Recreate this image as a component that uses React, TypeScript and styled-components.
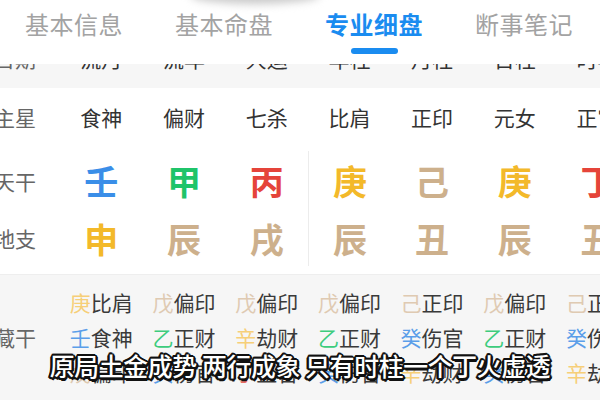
import React from 'react'
import styled, { createGlobalStyle } from 'styled-components'

const GlobalStyle = createGlobalStyle`
    html, body {
        margin: 0;
        padding: 0;
        background: #ffffff;
        font-family: "Noto Sans CJK SC", "Noto Sans", sans-serif;
    }
`

const Screen = styled.div`
    position: relative;
    width: 600px;
    height: 400px;
    overflow: hidden;
    background: #fff;
    display: flex;
    flex-direction: column;
`
const Smudge = styled.div`
    position: absolute;
    top: -14px;
    left: 190px;
    width: 130px;
    height: 18px;
    border-radius: 50%;
    background: #c9c9c9;
    filter: blur(4px);
    z-index: 3;
`
const TabBar = styled.div`
    position: relative;
    z-index: 2;
    height: 64px;
    flex-shrink: 0;
    background: #fff;
    display: grid;
    grid-template-columns: repeat(4, 150px);
    margin-left: -1px;
`
const Tab = styled.div<{ $active?: boolean }>`
    display: flex;
    flex-direction: column;
    align-items: center;
    padding-top: 8px;
    font-size: 24px;
    line-height: 32px;
    letter-spacing: 0.5px;
    color: ${p => (p.$active ? '#1a8cf0' : '#a3a3a3')};
    font-weight: ${p => (p.$active ? 700 : 400)};
`
const TabLine = styled.div`
    margin-top: 8px;
    width: 47px;
    height: 6px;
    border-radius: 3px;
    background: #1a8cf0;
`
const Viewport = styled.div`
    flex: 1;
    overflow: hidden;
`
const Sheet = styled.div`
    margin-top: -24px;
    margin-left: -10px;
`
const Row = styled.div<{ $h: number; $pb?: number; $grey?: boolean }>`
    display: grid;
    grid-template-columns: 70px repeat(7, 82.7px);
    height: ${p => p.$h}px;
    box-sizing: border-box;
    padding-bottom: ${p => p.$pb ?? 0}px;
    align-items: center;
    background: ${p => (p.$grey ? '#f6f6f6' : '#fff')};
`
const Label = styled.div`
    padding-right: 20px;
    text-align: center;
    font-size: 21px;
    color: #666;
`
const Cell = styled.div<{ $split?: boolean }>`
    height: 100%;
    display: flex;
    align-items: center;
    justify-content: center;
    font-size: 21px;
    color: #333;
    border-left: ${p => (p.$split ? '1px solid #ececec' : 'none')};
`
const BigChar = styled.span<{ $c: string }>`
    font-size: 34px;
    font-weight: 700;
    color: ${p => p.$c};
`
const Hidden = styled.div`
    display: grid;
    grid-template-columns: 70px repeat(7, 82.7px);
    grid-template-rows: repeat(3, 35px);
    padding-top: 9px;
    background: #f6f6f6;
    height: 160px;
    border-top: 1px solid #eeeeee;
`
const HiddenLabel = styled(Label)`
    grid-row: 1 / span 3;
    align-self: center;
`
const HiddenCell = styled.div`
    display: flex;
    align-items: center;
    justify-content: center;
    font-size: 21px;
    color: #3a3a3a;
`
const Stem = styled.span<{ $c: string }>`
    color: ${p => p.$c};
`
const Subtitle = styled.div`
    position: absolute;
    left: 0;
    right: 0;
    top: 347px;
    z-index: 4;
    text-align: center;
    font-size: 24.8px;
    font-weight: 500;
    color: #fff;
    letter-spacing: -0.3px;
    text-shadow:
        2px 0 0 #111, -2px 0 0 #111, 0 2px 0 #111, 0 -2px 0 #111,
        1.5px 1.5px 0 #111, -1.5px 1.5px 0 #111, 1.5px -1.5px 0 #111, -1.5px -1.5px 0 #111,
        2.5px 1px 0 #111, -2.5px 1px 0 #111, 1px 2.5px 0 #111, -1px -2.5px 0 #111;
`

const C = {
    blue: '#3a8ee8',
    green: '#1fc46a',
    red: '#e5443a',
    yellow: '#f3b92a',
    tan: '#cdb08c',
}
const L = {
    blue: '#5b9ee9',
    green: '#3dcc7d',
    red: '#ea6a62',
    yellow: '#f6cf78',
    tan: '#dfcab2',
}

const tabs = ['基本信息', '基本命盘', '专业细盘', '断事笔记']
const heads = ['流月', '流年', '大运', '年柱', '月柱', '日柱', '时柱']
const stars = ['食神', '偏财', '七杀', '比肩', '正印', '元女', '正官']
const gan: [string, string][] = [
    ['壬', C.blue], ['甲', C.green], ['丙', C.red], ['庚', C.yellow],
    ['己', C.tan], ['庚', C.yellow], ['丁', C.red],
]
const zhi: [string, string][] = [
    ['申', C.yellow], ['辰', C.tan], ['戌', C.tan], ['辰', C.tan],
    ['丑', C.tan], ['辰', C.tan], ['丑', C.tan],
]
const stemColor: Record<string, string> = {
    庚: L.yellow, 辛: L.yellow, 戊: L.tan, 己: L.tan,
    壬: L.blue, 癸: L.blue, 甲: L.green, 乙: L.green, 丙: L.red, 丁: L.red,
}
const hidden = [
    ['庚比肩', '戊偏印', '戊偏印', '戊偏印', '己正印', '戊偏印', '己正印'],
    ['壬食神', '乙正财', '辛劫财', '乙正财', '癸伤官', '乙正财', '癸伤官'],
    ['戊偏印', '癸伤官', '丁正官', '癸伤官', '辛劫财', '癸伤官', '辛劫财'],
]

const App = () => {
    return (
        <>
            <GlobalStyle />
            <Screen>
                <Smudge />
                <TabBar>
                    {tabs.map((t, i) => (
                        <Tab key={t} $active={i === 2}>
                            {t}
                            {i === 2 && <TabLine />}
                        </Tab>
                    ))}
                </TabBar>
                <Viewport>
                    <Sheet>
                        <Row $h={48} $pb={12} $grey>
                            <Label>日期</Label>
                            {heads.map((h, i) => <Cell key={i}>{h}</Cell>)}
                        </Row>
                        <Row $h={63} $pb={5}>
                            <Label>主星</Label>
                            {stars.map((s, i) => <Cell key={i}>{s}</Cell>)}
                        </Row>
                        <Row $h={59}>
                            <Label>天干</Label>
                            {gan.map(([g, c], i) => (
                                <Cell key={i} $split={i === 3}><BigChar $c={c}>{g}</BigChar></Cell>
                            ))}
                        </Row>
                        <Row $h={64} $pb={8}>
                            <Label>地支</Label>
                            {zhi.map(([z, c], i) => (
                                <Cell key={i} $split={i === 3}><BigChar $c={c}>{z}</BigChar></Cell>
                            ))}
                        </Row>
                        <Hidden>
                            <HiddenLabel>藏干</HiddenLabel>
                            {hidden.map((row, r) =>
                                row.map((h, i) => (
                                    <HiddenCell key={r + '-' + i} style={{ gridRow: r + 1, gridColumn: i + 2 }}>
                                        <Stem $c={stemColor[h[0]]}>{h[0]}</Stem>
                                        {h.slice(1)}
                                    </HiddenCell>
                                ))
                            )}
                        </Hidden>
                    </Sheet>
                </Viewport>
                <Subtitle>原局土金成势 两行成象 只有时柱一个丁火虚透</Subtitle>
            </Screen>
        </>
    )
}

export default App
